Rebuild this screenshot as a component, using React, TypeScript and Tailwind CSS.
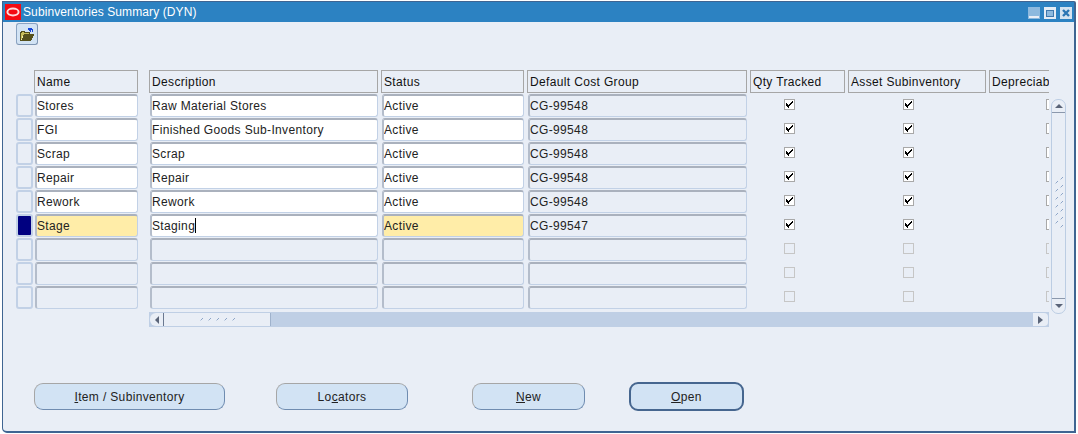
const rows = [
  ["Stores", "Raw Material Stores", "Active", "CG-99548"],
  ["FGI", "Finished Goods Sub-Inventory", "Active", "CG-99548"],
  ["Scrap", "Scrap", "Active", "CG-99548"],
  ["Repair", "Repair", "Active", "CG-99548"],
  ["Rework", "Rework", "Active", "CG-99548"],
  ["Stage", "Staging", "Active", "CG-99547"],
  null,
  null,
  null,
];

function Check() {
  return (
    <svg viewBox="0 0 9 9" className="w-[9px] h-[9px] block" shapeRendering="crispEdges">
      <path d="M1 3h1v1h1v1h1V4h1V3h1V2h1V1h1v2H7v1H6v1H5v1H4v2H3V7H2V6H1z" fill="#000" />
    </svg>
  );
}

function Box({ checked, enabled }: { checked: boolean; enabled: boolean }) {
  return (
    <div className={`w-[11px] h-[11px] border box-border flex items-center justify-center ${enabled ? "bg-white border-[#a8a8a8]" : "border-[#c6c6c6]"}`}>
      {checked && <Check />}
    </div>
  );
}

function Header({ w, children }: { w: string; children: string }) {
  return (
    <div className={`${w} h-[23px] shrink-0 border border-[#a6a6a6] pl-[2px] leading-[22px] overflow-hidden whitespace-nowrap text-[#111]`}>
      {children}
    </div>
  );
}

function Cell({ w, kind, children }: { w: string; kind: "white" | "yellow" | "plain"; children?: React.ReactNode }) {
  const bg = kind === "white" ? "bg-white" : kind === "yellow" ? "bg-[#ffeda8]" : "bg-[#e9eef6]";
  return (
    <div className={`${w} h-[23px] shrink-0 rounded-[3px] border border-t-[2px] border-l-[2px] border-t-[#aab1bd] border-l-[#b4bdcb] border-r-[#c2d1e6] border-b-[#c2d1e6] ${bg} leading-[21px] whitespace-nowrap overflow-hidden text-[#222]`}>
      {children}
    </div>
  );
}

function Btn({ w, ml, label, focus }: { w: string; ml: string; label: React.ReactNode; focus?: boolean }) {
  return (
    <div
      className={`${w} ${ml} ${
        focus
          ? "h-[29px] border-2 border-[#46668f] rounded-[9px]"
          : "h-[27px] border border-[#a6a6a6] border-r-[#6f8cb0] border-b-[#6f8cb0] rounded-[9px] my-px"
      } shrink-0 bg-[#d2e3f4] flex items-center justify-center text-[#222]`}
    >
      <span>{label}</span>
    </div>
  );
}

function Dots({ n, cls }: { n: number; cls: string }) {
  return (
    <div className={cls}>
      {Array.from({ length: n }).map((_, i) => (
        <svg key={i} viewBox="0 0 3 3" className="w-[3px] h-[3px] block" shapeRendering="crispEdges">
          <rect x="2" y="0" width="1" height="1" fill="#8ea6c8" />
          <rect x="1" y="1" width="1" height="1" fill="#8ea6c8" />
          <rect x="0" y="2" width="1" height="1" fill="#c5d2e4" />
        </svg>
      ))}
    </div>
  );
}

export default function App() {
  return (
    <div className="w-[1078px] h-[434px] bg-white overflow-hidden font-['Liberation_Sans',Arial,sans-serif] text-[12px] tracking-[0.35px]">
      <div className="ml-[2px] mt-px w-[1074px] h-[432px] bg-[#e9eef6] border border-r-2 border-b-2 border-[#3f6592] rounded-tr-[2px] rounded-bl-[5px] overflow-hidden">
        <div className="h-[20px] bg-[#2c82c2] flex items-center text-white">
          <svg viewBox="0 0 16 16" className="w-4 h-4 ml-[2px] shrink-0">
            <rect width="16" height="16" fill="#f40b12" />
            <ellipse cx="8" cy="8" rx="5.6" ry="3.4" fill="none" stroke="#ffd9d9" strokeWidth="2" />
          </svg>
          <span className="ml-[2px] text-[12px] tracking-[0.1px]">Subinventories Summary (DYN)</span>
          <div className="ml-auto mr-[2px] flex gap-[4px] mt-px">
            <svg viewBox="0 0 12 12" className="w-[12px] h-[12px]" shapeRendering="crispEdges">
              <rect width="12" height="12" fill="#8db9de" />
              <rect x="1" y="9" width="10" height="2" fill="#e9eef6" />
            </svg>
            <svg viewBox="0 0 12 12" className="w-[12px] h-[12px]" shapeRendering="crispEdges">
              <rect width="12" height="12" fill="#e4ecf5" />
              <rect x="2.5" y="3.5" width="7" height="6" fill="#8db9de" stroke="#3f78ad" />
            </svg>
            <svg viewBox="0 0 12 12" className="w-[12px] h-[12px]">
              <rect width="12" height="12" fill="#d5e3f0" />
              <path d="M3 3l6 6M9 3l-6 6" stroke="#2c76b4" strokeWidth="2.4" />
            </svg>
          </div>
        </div>

        <div className="ml-[13px] mt-px w-[22px] h-[22px] rounded-[3px] border border-[#8aa3c2] border-r-[#7e95b3] border-b-[#7e95b3] bg-[#d2e3f4] flex items-center justify-center">
          <svg viewBox="0 0 16 15" className="w-4 h-[15px]" shapeRendering="crispEdges">
            <path d="M9 3V1h4v1h1v3h-1V3h-1v2h-1V4h-1V3z" fill="#1747d8" />
            <path d="M1 5h1V4h4v1h5v2h4l-3 7H1z" fill="#c9bf5c" />
            <path d="M4 8h10l-2 5H2z" fill="#f2ecaa" />
            <path d="M1 5h1V4h4v1h5v2h4v1l-3 6H1zM2 6v7h1l2-6h5V6H5V5H3v1z" fill="#55501c" />
          </svg>
        </div>

        <div className="ml-[13px] mt-[25px] flex">
          <div className="w-[1033px] shrink-0 overflow-hidden">
            <div className="flex w-[1100px]">
              <div className="w-[18px] shrink-0" />
              <Header w="w-[104px]">Name</Header>
              <div className="w-[11px] shrink-0" />
              <Header w="w-[229px]">Description</Header>
              <div className="w-[3px] shrink-0" />
              <Header w="w-[143px]">Status</Header>
              <div className="w-[3px] shrink-0" />
              <Header w="w-[220px]">Default Cost Group</Header>
              <div className="w-[3px] shrink-0" />
              <Header w="w-[95px]">Qty Tracked</Header>
              <div className="w-[3px] shrink-0" />
              <Header w="w-[138px]">Asset Subinventory</Header>
              <div className="w-[3px] shrink-0" />
              <Header w="w-[100px]">Depreciable</Header>
            </div>
            <div className="flex flex-col gap-px mt-px w-[1100px]">
              {rows.map((r, i) => {
                const active = i === 5;
                const kind = r ? "white" : "plain";
                return (
                  <div key={i} className="flex h-[23px]">
                    <div className={`w-[17px] h-[23px] shrink-0 rounded-[3px] border-2 border-[#c2d1e6] ${active ? "bg-[#000080]" : "bg-[#e9eef6]"}`} />
                    <div className="w-[2px] shrink-0" />
                    <Cell w="w-[103px]" kind={active ? "yellow" : kind}>{r?.[0]}</Cell>
                    <div className="w-[12px] shrink-0" />
                    <Cell w="w-[228px]" kind={kind}>
                      {r?.[1]}
                      {active && <span className="inline-block w-px h-[15px] bg-black align-[-3px]" />}
                    </Cell>
                    <div className="w-[4px] shrink-0" />
                    <Cell w="w-[142px]" kind={active ? "yellow" : kind}>{r?.[2]}</Cell>
                    <div className="w-[4px] shrink-0" />
                    <Cell w="w-[219px]" kind="plain">{r?.[3]}</Cell>
                    <div className="w-[37px] shrink-0" />
                    <div className="w-[11px] h-[21px] shrink-0 flex items-center"><Box checked={!!r} enabled={!!r} /></div>
                    <div className="w-[108px] shrink-0" />
                    <div className="w-[11px] h-[21px] shrink-0 flex items-center"><Box checked={!!r} enabled={!!r} /></div>
                    <div className="w-[132px] shrink-0" />
                    <div className="w-[11px] h-[21px] shrink-0 flex items-center"><Box checked={false} enabled={!!r} /></div>
                  </div>
                );
              })}
            </div>
            <div className="ml-[133px] mt-[3px] w-[900px] h-[15px] bg-[#bfcfe5] flex p-px">
              <div className="w-[14px] bg-[#e9eef6] border-r border-[#6a7890] rounded-l-[6px] flex items-center justify-center">
                <div className="w-0 h-0 border-y-[4px] border-y-transparent border-r-[4px] border-r-[#5a6478]" />
              </div>
              <div className="w-[107px] bg-[#e9eef6] border-r border-[#9fb2cc] flex items-center justify-center">
                <Dots n={5} cls="flex gap-[5px]" />
              </div>
              <div className="ml-auto w-[15px] bg-[#e9eef6] rounded-r-[4px] flex items-center justify-center">
                <div className="w-0 h-0 border-y-[4px] border-y-transparent border-l-[5px] border-l-[#5a6478]" />
              </div>
            </div>
          </div>
          <div className="ml-[2px] mt-[29px] w-[15px] h-[215px] rounded-[7px] border border-[#bccde3] flex flex-col">
            <div className="h-[13px] border-b border-[#8b98ac] flex items-center justify-center">
              <div className="w-0 h-0 border-x-[4px] border-x-transparent border-b-[4px] border-b-[#5a6478]" />
            </div>
            <div className="flex-1 flex justify-center gap-x-[2px] pt-[64px]">
              <Dots n={6} cls="flex flex-col gap-y-[5px] pt-[4px]" />
              <Dots n={7} cls="flex flex-col gap-y-[5px]" />
            </div>
            <div className="h-[15px] border-t border-[#8b98ac] flex items-center justify-center">
              <div className="w-0 h-0 border-x-[4px] border-x-transparent border-t-[4px] border-t-[#5a6478]" />
            </div>
          </div>
        </div>

        <div className="flex mt-[55px] ml-[31px] items-start">
          <Btn w="w-[191px]" ml="" label={<><u>I</u>tem / Subinventory</>} />
          <Btn w="w-[132px]" ml="ml-[51px]" label={<>Lo<u>c</u>ators</>} />
          <Btn w="w-[113px]" ml="ml-[64px]" label={<><u>N</u>ew</>} />
          <Btn w="w-[115px]" ml="ml-[44px]" label={<><u>O</u>pen</>} focus />
        </div>
      </div>
    </div>
  );
}
